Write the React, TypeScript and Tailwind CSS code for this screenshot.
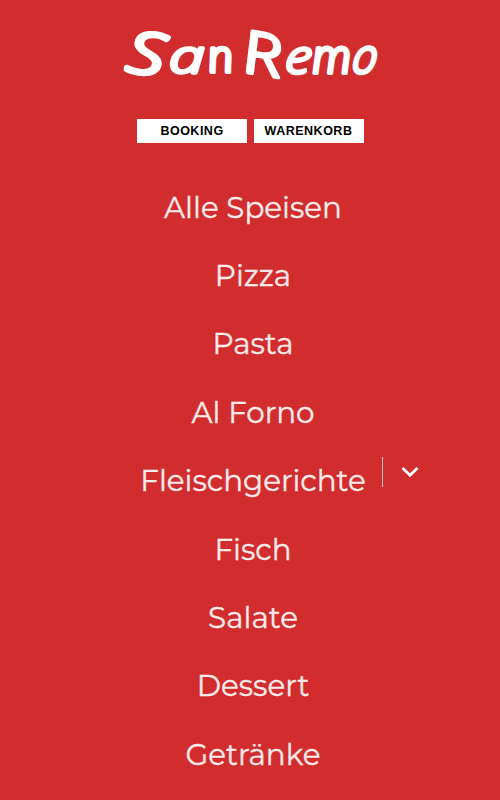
import React from "react";

interface IMenuItem {
  label: string;
  hasSubmenu?: boolean;
}

const menuItems: IMenuItem[] = [
  { label: "Alle Speisen" },
  { label: "Pizza" },
  { label: "Pasta" },
  { label: "Al Forno" },
  { label: "Fleischgerichte", hasSubmenu: true },
  { label: "Fisch" },
  { label: "Salate" },
  { label: "Dessert" },
  { label: "Getränke" },
];

// every letter of the brand name gets its own slant and size
const logoLetters = [
  { char: "S", transform: "translate(5 49) rotate(8) skewX(0) scale(1.85 1.43)", stroke: 3.2 },
  { char: "a", transform: "translate(49 51) skewX(0) scale(1.6 1.16)", stroke: 3 },
  { char: "n", transform: "translate(90 50) skewX(10) scale(1.12 1.12)", stroke: 3.6 },
  { char: "R", transform: "translate(125 50) rotate(9) skewX(16) scale(1.7 1.44)", stroke: 2.8 },
  { char: "e", transform: "translate(164 51) skewX(-6) scale(1.32 1.16)", stroke: 3 },
  { char: "m", transform: "translate(193 51) skewX(4) scale(1.14 1.18)", stroke: 3.4 },
  { char: "o", transform: "translate(231 51) skewX(-8) scale(1.08 1.2)", stroke: 3.2 },
];

function Logo() {
  return (
    <svg
      width="264"
      height="64"
      viewBox="0 0 264 64"
      aria-label="San Remo"
      className="block overflow-visible font-['Open_Sans',sans-serif] text-[40px] font-light italic"
    >
      {logoLetters.map((letter, i) => (
        <text
          key={i}
          transform={letter.transform}
          fill="#fff"
          stroke="#fff"
          strokeWidth={letter.stroke}
          strokeLinejoin="round"
        >
          {letter.char}
        </text>
      ))}
    </svg>
  );
}

export default function App() {
  return (
    <div className="h-[800px] w-[500px] overflow-hidden bg-[#d12c2e]">
      <header className="flex flex-col items-center pt-[22px]">
        <div className="pl-1">
          <Logo />
        </div>
        <div className="mt-[33px] flex gap-[7px] font-['Liberation_Sans',Arial,sans-serif] text-[12.5px] font-bold tracking-[0.5px] text-black">
          <button className="h-[24px] w-[110px] bg-white pl-px">BOOKING</button>
          <button className="h-[24px] w-[110px] bg-white">WARENKORB</button>
        </div>
      </header>

      <nav className="mt-[30.5px] pl-[6px] font-['Montserrat','Inter',sans-serif] text-[29.4px] font-normal text-[#fdeaea] [-webkit-text-stroke:0.35px_#fdeaea]">
        {menuItems.map((item) => (
          <div
            key={item.label}
            className="relative flex h-[68.4px] items-center justify-center"
          >
            <a href="#">{item.label}</a>
            {item.hasSubmenu && (
              <button className="absolute top-[10px] left-[376px] flex h-[30px] items-center border-l border-[#f3c4c4] pl-[18px]">
                <svg width="18" height="12" viewBox="0 0 18 12" fill="none">
                  <path d="M1.5 2 9 9.2 16.5 2" stroke="#fff" strokeWidth="2.8" />
                </svg>
              </button>
            )}
          </div>
        ))}
      </nav>
    </div>
  );
}
